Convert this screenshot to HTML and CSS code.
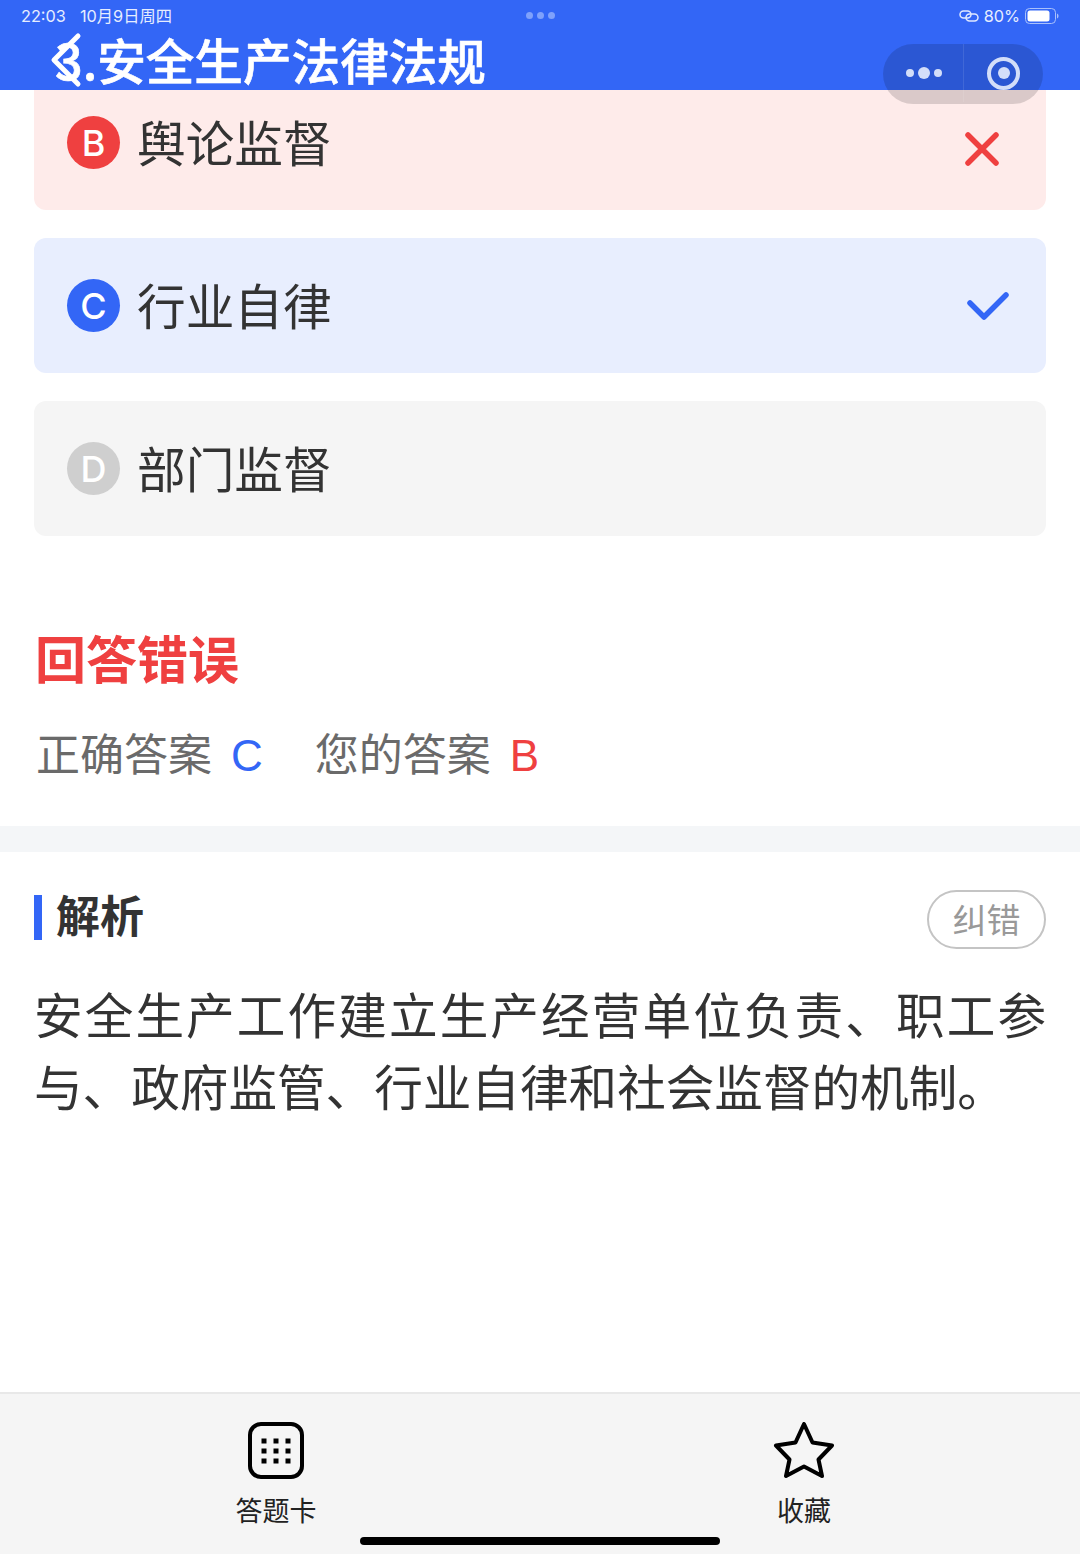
FILE: index.html
```html
<!DOCTYPE html>
<html lang="zh-CN">
<head>
<meta charset="utf-8">
<title>安全生产法律法规</title>
<link rel="stylesheet" href="styles.css">
</head>
<body>
<div class="page">
  <header class="header">
    <div class="status">
      <div class="status-left"><span>22:03</span><span>10月9日周四</span></div>
      <div class="status-dots"><i></i><i></i><i></i></div>
      <div class="status-right">
        <svg class="link-icon" width="20" height="14" viewBox="0 0 20 14" fill="none" stroke="#dfe8ff" stroke-width="1.5"><rect x="1" y="2" width="11" height="7" rx="3.5"/><rect x="7" y="5" width="12" height="7" rx="3.5"/></svg>
        <span>80%</span>
        <svg width="34" height="16" viewBox="0 0 34 16"><rect x="0.5" y="0.5" width="30" height="15" rx="4" fill="none" stroke="#a9c0fb"/><rect x="2.5" y="2.5" width="22" height="11" rx="2.5" fill="#fff"/><path d="M32 5.500c1 .5 1.500 1.400 1.500 2.500s-.5 2-1.500 2.500z" fill="#a9c0fb"/></svg>
      </div>
    </div>
    <div class="nav">
      <svg class="back" width="34" height="56" viewBox="0 0 34 56" fill="none" stroke="#fff" stroke-width="5" stroke-linecap="round" stroke-linejoin="round"><path d="M28 4 4 28l24 24"/></svg>
      <h1 class="title">3.安全生产法律法规</h1>
    </div>
    <div class="capsule">
      <div class="capsule-more"><i></i><b></b><i></i></div>
      <div class="capsule-close"><span></span></div>
    </div>
  </header>

  <main class="main">
    <section class="options">
      <div class="option wrong">
        <span class="letter">B</span><span class="option-text">舆论监督</span>
        <svg class="mark mark-x" width="34" height="34" viewBox="0 0 34 34" fill="none" stroke="#ef4040" stroke-width="5.500" stroke-linecap="round"><path d="M3 3l28 28M31 3 3 31"/></svg>
      </div>
      <div class="option right">
        <span class="letter">C</span><span class="option-text">行业自律</span>
        <svg class="mark mark-check" width="44" height="32" viewBox="0 0 44 32" fill="none" stroke="#3366f6" stroke-width="5.500" stroke-linecap="round" stroke-linejoin="round"><path d="M4 12l14 14L40 4"/></svg>
      </div>
      <div class="option plain">
        <span class="letter">D</span><span class="option-text">部门监督</span>
      </div>
    </section>

    <section class="result">
      <h2 class="result-title">回答错误</h2>
      <p class="answers">
        <span class="answer">正确答案<em class="blue">C</em></span>
        <span class="answer">您的答案<em class="red">B</em></span>
      </p>
    </section>

    <div class="band"></div>

    <section class="analysis">
      <div class="analysis-head">
        <h3 class="analysis-title">解析</h3>
        <span class="report">纠错</span>
      </div>
      <p class="analysis-text">安全生产工作建立生产经营单位负责、职工参与、政府监管、行业自律和社会监督的机制。</p>
    </section>
  </main>

  <footer class="footer">
    <div class="tab">
      <svg width="58" height="58" viewBox="0 0 58 58" fill="none"><rect x="3" y="2" width="52" height="53" rx="11" stroke="#000" stroke-width="4"/><g fill="#000"><rect x="14.500" y="16.500" width="5" height="5"/><rect x="26.500" y="16.500" width="5" height="5"/><rect x="38.500" y="16.500" width="5" height="5"/><rect x="14.500" y="26.500" width="5" height="5"/><rect x="26.500" y="26.500" width="5" height="5"/><rect x="38.500" y="26.500" width="5" height="5"/><rect x="14.500" y="36.500" width="5" height="5"/><rect x="26.500" y="36.500" width="5" height="5"/><rect x="38.500" y="36.500" width="5" height="5"/></g></svg>
      <span>答题卡</span>
    </div>
    <div class="tab">
      <svg width="62" height="58" viewBox="0 0 62 58" fill="none"><path d="M31 2l8.500 18.500L59 23.500 45.500 37.500 49 54 31 44.500 13 54l3.500-16.500L3 23.500l19.500-3z" stroke="#000" stroke-width="4" stroke-linejoin="round"/></svg>
      <span>收藏</span>
    </div>
    <div class="home-bar"></div>
  </footer>
</div>
</body>
</html>
```
FILE: styles.css
```css
* { box-sizing: border-box; }
html, body { margin: 0; padding: 0; }
body {
  width: 1080px;
  height: 1554px;
  overflow: hidden;
  background: #fff;
  font-family: "Noto Sans CJK SC", "Noto Sans", sans-serif;
  color: #333;
}
.page { display: flex; flex-direction: column; height: 1554px; }

.header {
  position: relative;
  z-index: 2;
  height: 90px;
  flex: none;
  background: #3366f6;
  color: #fff;
}
.status {
  display: grid;
  grid-template-columns: 1fr auto 1fr;
  align-items: center;
  height: 30px;
  padding: 1px 21px 0 21px;
  font: 16.300px/20px Inter, "Noto Sans CJK SC", sans-serif;
  color: #e6edff;
}
.status-left { display: flex; gap: 14px; }
.status-dots { display: flex; gap: 4px; }
.status-dots i { width: 7px; height: 7px; border-radius: 50%; background: #7fa1fb; }
.status-right { display: flex; justify-content: flex-end; align-items: center; gap: 5px; }
.nav { display: flex; align-items: center; height: 60px; padding: 0 0 2px 50px; }
.back { flex: none; margin-right: -29px; margin-top: 2px; }
.title {
  margin: 0;
  font-size: 48.600px;
  line-height: 56px;
  font-weight: 500;
  color: #fff;
  white-space: nowrap;
  -webkit-text-stroke: 0.6px #fff;
}
.capsule {
  position: absolute;
  left: 883px;
  top: 44px;
  width: 160px;
  height: 60px;
  display: flex;
  padding-bottom: 2px;
  border-radius: 30px;
  background: rgba(0, 0, 0, 0.14);
}
.capsule-more {
  width: 81px;
  display: flex;
  align-items: center;
  justify-content: center;
  gap: 4px;
  padding-left: 2px;
  border-right: 1px solid rgba(255, 255, 255, 0.1);
}
.capsule-more i { width: 8px; height: 8px; border-radius: 50%; background: #d3def9; }
.capsule-more b { width: 12px; height: 12px; border-radius: 50%; background: #d3def9; }
.capsule-close { flex: 1; display: flex; align-items: center; justify-content: center; }
.capsule-close span {
  width: 33px;
  height: 33px;
  border-radius: 50%;
  border: 4px solid #d3def9;
  display: flex;
  align-items: center;
  justify-content: center;
}
.capsule-close span::after {
  content: "";
  width: 12px;
  height: 12px;
  border-radius: 50%;
  background: #d3def9;
}

.main { flex: 1; min-height: 0; }
.options {
  display: flex;
  flex-direction: column;
  gap: 28px;
  margin-top: -15px;
  padding: 0 34px;
}
.option {
  display: flex;
  align-items: center;
  height: 135px;
  padding: 0 36px 0 33px;
  border-radius: 12px;
}
.wrong { background: #feebea; }
.right { background: #e8eefe; }
.plain { background: #f5f5f5; }
.letter {
  flex: none;
  width: 53px;
  height: 53px;
  border-radius: 50%;
  display: flex;
  align-items: center;
  justify-content: center;
  font: 500 36px/1 Inter, "Liberation Sans", sans-serif;
  color: #fff;
}
.wrong .letter { background: #ef4040; }
.right .letter { background: #3366f6; }
.plain .letter { background: #cfcfcf; }
.option-text {
  flex: 1;
  margin: 0 0 3px 17px;
  font-size: 48.700px;
  line-height: 60px;
  color: #333;
}
.mark-x { margin-right: 11px; margin-top: 12px; }
.mark-check { margin-right: 0; margin-top: 2px; }

.result { padding: 89px 36px 0; height: 290px; }
.result-title {
  margin: 0 0 0 -1px;
  font-size: 51px;
  line-height: 64px;
  font-weight: 700;
  color: #ef4040;
}
.answers {
  display: flex;
  gap: 52px;
  margin: 35px 0 0;
  font-size: 44px;
  line-height: 56px;
  color: #6a6a6a;
}
.answer em { margin-left: 19px; font: normal 44px/56px "Liberation Sans", sans-serif; }
.blue { color: #3366f6; }
.red { color: #ef4040; }
.band { height: 26px; background: #f4f6f8; }

.analysis { padding: 37px 34px 0; }
.analysis-head { display: flex; align-items: center; justify-content: space-between; height: 60px; }
.analysis-title {
  margin: -4px 0 0;
  padding-left: 14px;
  border-left: 8px solid #3366f6;
  height: 45px;
  font-size: 44px;
  line-height: 39px;
  font-weight: 700;
  color: #333;
}
.report {
  width: 119px;
  height: 59px;
  border: 2px solid #c4c4c4;
  border-radius: 30px;
  font-size: 34px;
  line-height: 54px;
  text-align: center;
  color: #999;
}
.analysis-text {
  margin: 28px 0 0;
  font-size: 48.600px;
  line-height: 72px;
  color: #333;
  text-align: justify;
}

.footer {
  position: relative;
  flex: none;
  height: 162px;
  display: flex;
  padding-left: 216px;
  gap: 408px;
  background: #f5f5f5;
  border-top: 2px solid #e8e8e8;
}
.tab {
  display: flex;
  flex-direction: column;
  align-items: center;
  width: 120px;
  padding-top: 28px;
  font-size: 27px;
  line-height: 36px;
  color: #222;
  gap: 12px;
}
.home-bar {
  position: absolute;
  left: 360px;
  top: 143px;
  width: 360px;
  height: 8px;
  border-radius: 4px;
  background: #000;
}
```
